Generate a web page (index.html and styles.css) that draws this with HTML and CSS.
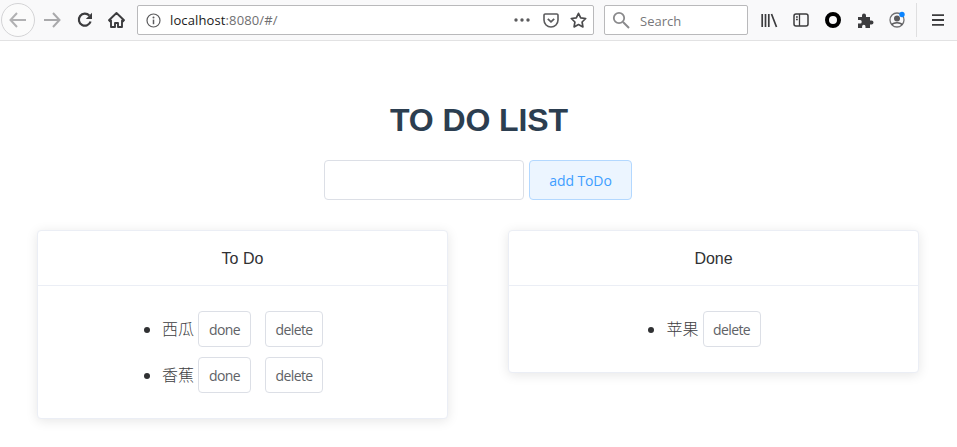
FILE: index.html
```html
<!DOCTYPE html>
<html lang="zh">
<head>
<meta charset="utf-8">
<title>TO DO LIST</title>
<link rel="stylesheet" href="styles.css">
</head>
<body>
<header class="toolbar">
  <div class="nav">
    <span class="slot back"><svg width="18" height="16" viewBox="0 0 18 16"><path d="M8 1 1.500 8 8 15M1.500 8H17" fill="none" stroke="#b1b1b3" stroke-width="2"/></svg></span>
    <span class="slot fwd"><svg width="18" height="16" viewBox="0 0 18 16"><path d="M10 1l6.500 7-6.500 7M16.500 8H1" fill="none" stroke="#a9a9ab" stroke-width="2"/></svg></span>
    <span class="slot reload"><svg width="16" height="16" viewBox="0 0 16 16"><path d="M13.600 9.500A6 6 0 1 1 12.300 3.600" fill="none" stroke="#3c3c3e" stroke-width="2.200"/><path d="M15 .8V7H8.800z" fill="#3c3c3e"/></svg></span>
    <span class="slot home"><svg width="17" height="16" viewBox="0 0 17 16"><path d="M8.500 1 1 8.200l1 1.100L3 8.400V15h4v-4h3v4h4V8.400l1 .9 1-1.100z" fill="none" stroke="#3c3c3e" stroke-width="1.900" stroke-linejoin="round"/></svg></span>
  </div>
  <div class="urlbar">
    <svg class="info" width="15" height="15" viewBox="0 0 15 15"><circle cx="7.500" cy="7.500" r="6.500" fill="none" stroke="#5b5b5d" stroke-width="1.200"/><path d="M7.500 6.600v4.600" stroke="#5b5b5d" stroke-width="1.500"/><circle cx="7.500" cy="4.400" r="1" fill="#5b5b5d"/></svg>
    <span class="url"><span class="host">localhost</span>:8080/#/</span>
    <svg class="dots" width="16" height="4" viewBox="0 0 16 4"><circle cx="2" cy="2" r="1.700"/><circle cx="8" cy="2" r="1.700"/><circle cx="14" cy="2" r="1.700"/></svg>
    <svg class="pocket" width="16" height="15" viewBox="0 0 16 15"><path d="M2.200 1h11.600A1.200 1.200 0 0 1 15 2.200V7A7 7 0 0 1 1 7V2.200A1.200 1.200 0 0 1 2.200 1z" fill="none" stroke="#5b5b5d" stroke-width="1.600"/><path d="M4.800 5.800 8 8.800l3.200-3" fill="none" stroke="#5b5b5d" stroke-width="1.800"/></svg>
    <svg class="star" width="17" height="16" viewBox="0 0 17 16"><path d="m8.500 1.300 2.200 4.500 5 .7-3.600 3.500.8 4.900-4.400-2.300-4.400 2.300.8-4.900L1.300 6.500l5-.7z" fill="none" stroke="#4a4a4c" stroke-width="1.700" stroke-linejoin="round"/></svg>
  </div>
  <div class="searchbar">
    <svg width="18" height="18" viewBox="0 0 18 18"><circle cx="7" cy="7" r="5.200" fill="none" stroke="#8a8a8c" stroke-width="1.800"/><path d="m11 11 6 6" stroke="#8a8a8c" stroke-width="2"/></svg>
    <span class="search-text">Search</span>
  </div>
  <div class="tools">
    <span class="slot"><svg width="17" height="15" viewBox="0 0 17 15"><path d="M1.200 1v13M4.500 1v13M7.800 1v13M10.500 1l5 13" fill="none" stroke="#3c3c3e" stroke-width="1.700"/></svg></span>
    <span class="slot"><svg width="16" height="14" viewBox="0 0 16 14"><rect x="1" y="1" width="14" height="12" rx="2" fill="none" stroke="#3c3c3e" stroke-width="1.500"/><path d="M6.500 1v12M3 4h1.800M3 6.500h1.800" stroke="#3c3c3e" stroke-width="1.300"/></svg></span>
    <span class="slot"><svg width="16" height="16" viewBox="0 0 16 16"><circle cx="8" cy="8" r="6" fill="none" stroke="#000" stroke-width="4"/></svg></span>
    <span class="slot"><svg width="17" height="16" viewBox="0 0 17 16"><path d="M1 5h4V3.500a2 2 0 1 1 4 0V5h4v3.500h1.500a2 2 0 1 1 0 4H13V16H8.500v-1.500a1.700 1.700 0 0 0-3.400 0V16H1v-4.500h1.500a1.800 1.800 0 1 0 0-3.500H1z" fill="#3c3c3e"/></svg></span>
    <span class="slot acct"><svg width="18" height="18" viewBox="0 0 18 18"><circle cx="9" cy="9" r="7" fill="none" stroke="#707072" stroke-width="1.300"/><circle cx="9" cy="7.500" r="3" fill="#5b5b5d"/><path d="M4 14c1-3 9-3 10 0" fill="none" stroke="#5b5b5d" stroke-width="1.700"/><circle class="dot" cx="14" cy="3.500" r="2.700"/></svg></span>
  </div>
  <div class="sep"></div>
  <span class="slot menu"><svg width="14" height="12" viewBox="0 0 14 12"><path d="M1 1.200h12M1 6h12M1 10.800h12" stroke="#3c3c3e" stroke-width="1.800"/></svg></span>
</header>

<main class="page">
  <h1 class="title">TO DO LIST</h1>
  <form class="add-form">
    <input class="add-input" type="text" aria-label="todo">
    <button class="btn btn-primary" type="button">add ToDo</button>
  </form>
  <div class="columns">
    <section class="card">
      <div class="card-head">To Do</div>
      <div class="card-body">
        <ul class="list">
          <li>西瓜 <button class="btn btn-done" type="button">done</button><button class="btn btn-delete btn-next" type="button">delete</button></li>
          <li>香蕉 <button class="btn btn-done" type="button">done</button><button class="btn btn-delete btn-next" type="button">delete</button></li>
        </ul>
      </div>
    </section>
    <section class="card">
      <div class="card-head">Done</div>
      <div class="card-body">
        <ul class="list">
          <li>苹果 <button class="btn btn-delete" type="button">delete</button></li>
        </ul>
      </div>
    </section>
  </div>
</main>
</body>
</html>
```
FILE: styles.css
```css
* { box-sizing: border-box; }
html, body { margin: 0; padding: 0; overflow: hidden; background: #fff; }
body { height: 447px; font-family: "Open Sans", "Noto Sans CJK SC", sans-serif; }

.toolbar {
  display: flex;
  align-items: center;
  height: 41px;
  padding-left: 1px;
  background: #f9f9fa;
  border-bottom: 1px solid #e2e2e3;
}
.toolbar > * { flex-shrink: 0; }
.slot { display: flex; align-items: center; justify-content: center; height: 34px; }
.nav { display: grid; grid-template-columns: 34px 34px 32px 30px; align-items: center; }
.back { border: 1px solid #d4d4d6; border-radius: 50%; background: #fbfbfb; }
.urlbar {
  display: flex;
  align-items: center;
  width: 457px;
  height: 30px;
  margin-left: 6px;
  background: #fff;
  border: 1px solid #b9b9bb;
  border-radius: 2px;
}
.info { margin-left: 8px; }
.url { margin-left: 9px; flex: 1; font-size: 13px; letter-spacing: .12px; color: #6f6f71; }
.host { color: #1a1a1a; }
.dots { fill: #5b5b5d; margin-right: 13px; }
.pocket { margin-right: 11px; }
.star { margin-right: 6px; }
.searchbar {
  display: flex;
  align-items: center;
  width: 144px;
  height: 30px;
  margin-left: 10px;
  padding-left: 7px;
  background: #fff;
  border: 1px solid #b9b9bb;
  border-radius: 2px;
}
.search-text { margin-left: 10px; padding-top: 1px; font-size: 13px; color: #77777a; }
.tools { display: grid; grid-template-columns: 32px 31px 33px 32px 32px; margin-left: 5px; align-items: center; }
.dot { fill: #0a84ff; }
.sep { width: 1px; height: 34px; margin-left: 3px; background: #dfdfe0; }
.menu { width: 40px; padding-left: 2px; }

.page { padding: 0 38px 0 37px; }
.title {
  margin: 61px 0 0;
  padding-left: 2px;
  font: bold 32px/37px "Liberation Sans", Arial, sans-serif;
  letter-spacing: -.1px;
  color: #2c3e50;
  text-align: center;
}
.add-form { display: flex; justify-content: center; gap: 5px; margin-top: 21px; }
.add-input {
  width: 200px;
  height: 40px;
  border: 1px solid #dcdfe6;
  border-radius: 4px;
  background: #fff;
  outline: none;
}
.btn {
  height: 36px;
  padding: 0;
  font-family: "Open Sans", "Noto Sans CJK SC", sans-serif;
  font-size: 14px;
  letter-spacing: -.6px;
  color: #606266;
  background: #fff;
  border: 1px solid #dcdfe6;
  border-radius: 4px;
  vertical-align: top;
}
.btn-done { width: 53px; }
.btn-delete { width: 58px; }
.btn-next { margin-left: 14px; }
.btn-primary {
  width: 103px;
  height: 40px;
  letter-spacing: -.1px;
  color: #409eff;
  background: #ecf5ff;
  border-color: #b3d8ff;
}
.columns { display: grid; grid-template-columns: 411px 411px; gap: 60px; align-items: start; margin-top: 30px; }
.card {
  background: #fff;
  border: 1px solid #ebeef5;
  border-radius: 4px;
  box-shadow: 0 2px 12px rgba(0, 0, 0, .1);
}
.card-head {
  height: 55px;
  padding-top: 1px;
  border-bottom: 1px solid #ebeef5;
  font: 16px/54px "Liberation Sans", Arial, sans-serif;
  color: #303133;
  text-align: center;
}
.card-body { padding: 25px 0 15px; }
.list { display: flex; flex-direction: column; align-items: center; margin: 0; padding: 0; }
.list li { height: 36px; margin-bottom: 10px; font-size: 16px; font-weight: 300; line-height: 36px; color: #3c3c3e; }
.list li::marker { color: #303133; }
```
